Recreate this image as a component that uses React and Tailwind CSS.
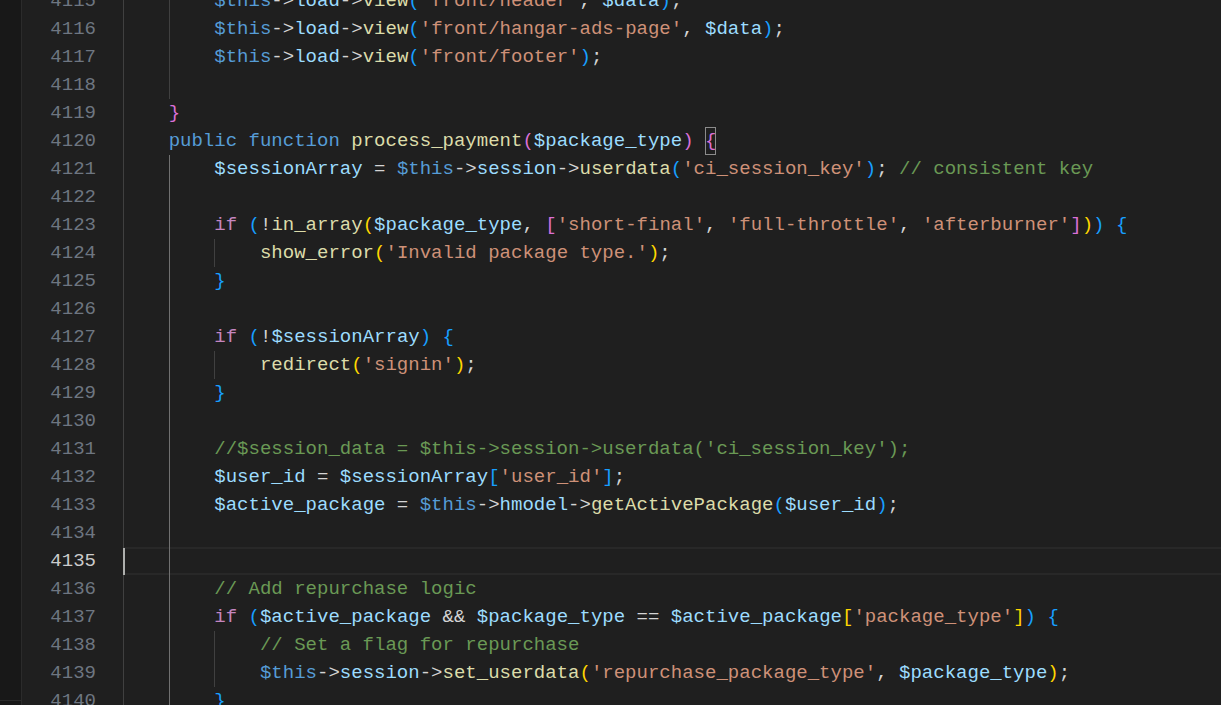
const C = {
  v: "text-[#9cdcfe]",
  t: "text-[#569cd6]",
  k: "text-[#c586c0]",
  f: "text-[#dcdcaa]",
  s: "text-[#ce9178]",
  c: "text-[#6a9955]",
  o: "text-[#d4d4d4]",
  y: "text-[#ffd700]",
  p: "text-[#da70d6]",
  b: "text-[#179fff]",
};

// guide kinds: d = dim, a = active scope
const OUTER = ["d", "d"];
const FN = ["d", "a"];
const IF = ["d", "a", "d"];

const lines = [
  { n: 4115, g: OUTER, code: [["$this", "t"], ["->", "o"], ["load", "v"], ["->", "o"], ["view", "f"], ["(", "b"], ["'front/header'", "s"], [", ", "o"], ["$data", "v"], [")", "b"], [";", "o"]] },
  { n: 4116, g: OUTER, code: [["$this", "t"], ["->", "o"], ["load", "v"], ["->", "o"], ["view", "f"], ["(", "b"], ["'front/hangar-ads-page'", "s"], [", ", "o"], ["$data", "v"], [")", "b"], [";", "o"]] },
  { n: 4117, g: OUTER, code: [["$this", "t"], ["->", "o"], ["load", "v"], ["->", "o"], ["view", "f"], ["(", "b"], ["'front/footer'", "s"], [")", "b"], [";", "o"]] },
  { n: 4118, g: OUTER, code: [] },
  { n: 4119, g: ["d"], code: [["}", "p"]] },
  { n: 4120, g: ["d"], code: [["public", "t"], [" ", "o"], ["function", "t"], [" ", "o"], ["process_payment", "f"], ["(", "p"], ["$package_type", "v"], [")", "p"], [" ", "o"], ["{", "p", true]] },
  { n: 4121, g: FN, code: [["$sessionArray", "v"], [" = ", "o"], ["$this", "t"], ["->", "o"], ["session", "v"], ["->", "o"], ["userdata", "f"], ["(", "b"], ["'ci_session_key'", "s"], [")", "b"], ["; ", "o"], ["// consistent key", "c"]] },
  { n: 4122, g: FN, code: [] },
  { n: 4123, g: FN, code: [["if", "k"], [" ", "o"], ["(", "b"], ["!", "o"], ["in_array", "f"], ["(", "y"], ["$package_type", "v"], [", ", "o"], ["[", "p"], ["'short-final'", "s"], [", ", "o"], ["'full-throttle'", "s"], [", ", "o"], ["'afterburner'", "s"], ["]", "p"], [")", "y"], [")", "b"], [" ", "o"], ["{", "b"]] },
  { n: 4124, g: IF, code: [["show_error", "f"], ["(", "y"], ["'Invalid package type.'", "s"], [")", "y"], [";", "o"]] },
  { n: 4125, g: FN, code: [["}", "b"]] },
  { n: 4126, g: FN, code: [] },
  { n: 4127, g: FN, code: [["if", "k"], [" ", "o"], ["(", "b"], ["!", "o"], ["$sessionArray", "v"], [")", "b"], [" ", "o"], ["{", "b"]] },
  { n: 4128, g: IF, code: [["redirect", "f"], ["(", "y"], ["'signin'", "s"], [")", "y"], [";", "o"]] },
  { n: 4129, g: FN, code: [["}", "b"]] },
  { n: 4130, g: FN, code: [] },
  { n: 4131, g: FN, code: [["//$session_data = $this->session->userdata('ci_session_key');", "c"]] },
  { n: 4132, g: FN, code: [["$user_id", "v"], [" = ", "o"], ["$sessionArray", "v"], ["[", "b"], ["'user_id'", "s"], ["]", "b"], [";", "o"]] },
  { n: 4133, g: FN, code: [["$active_package", "v"], [" = ", "o"], ["$this", "t"], ["->", "o"], ["hmodel", "v"], ["->", "o"], ["getActivePackage", "f"], ["(", "b"], ["$user_id", "v"], [")", "b"], [";", "o"]] },
  { n: 4134, g: FN, code: [] },
  { n: 4135, g: FN, code: [], current: true },
  { n: 4136, g: FN, code: [["// Add repurchase logic", "c"]] },
  { n: 4137, g: FN, code: [["if", "k"], [" ", "o"], ["(", "b"], ["$active_package", "v"], [" && ", "o"], ["$package_type", "v"], [" == ", "o"], ["$active_package", "v"], ["[", "y"], ["'package_type'", "s"], ["]", "y"], [")", "b"], [" ", "o"], ["{", "b"]] },
  { n: 4138, g: IF, code: [["// Set a flag for repurchase", "c"]] },
  { n: 4139, g: IF, code: [["$this", "t"], ["->", "o"], ["session", "v"], ["->", "o"], ["set_userdata", "f"], ["(", "y"], ["'repurchase_package_type'", "s"], [", ", "o"], ["$package_type", "v"], [")", "y"], [";", "o"]] },
  { n: 4140, g: FN, code: [["}", "b"]] },
];

function CodeLine({ line }) {
  return (
    <div
      className={
        "relative flex h-[28px] items-center whitespace-pre " +
        (line.current ? "border-y-2 border-[#282828]" : "")
      }
    >
      {line.g.map((kind, i) => (
        <span
          key={i}
          className={
            "h-[28px] w-[4ch] shrink-0 border-l " +
            (kind === "a" ? "border-[#707070]" : "border-[#404040]")
          }
        />
      ))}
      {line.code.map(([text, col, boxed], i) => (
        <span
          key={i}
          className={
            C[col] + (boxed ? " outline outline-1 outline-[#8b8b8b] -outline-offset-1" : "")
          }
        >
          {text}
        </span>
      ))}
      {line.current && (
        <span className="absolute left-0 top-[-1px] h-[27px] w-[2px] bg-[#aeafad]" />
      )}
    </div>
  );
}

export default function App() {
  return (
    <div
      className="flex h-[705px] w-[1221px] overflow-hidden bg-[#1f1f1f] text-[19.03px] leading-[28px]"
      style={{ fontFamily: '"Liberation Mono", "DejaVu Sans Mono", monospace' }}
    >
      {/* activity strip */}
      <div className="flex w-[22px] shrink-0 flex-col border-r border-[#2b2b2b] bg-[#181818]">
        <div className="flex-1" />
        <div className="h-[5px] border-t border-[#2b2b2b]" />
      </div>

      {/* line numbers */}
      <div className="w-[101px] shrink-0 overflow-hidden">
        <div className="-mt-[13px] flex flex-col">
          {lines.map((l) => (
            <div
              key={l.n}
              className={
                "h-[28px] pr-[27px] text-right " +
                (l.current ? "text-[#cccccc]" : "text-[#6e7681]")
              }
            >
              {l.n}
            </div>
          ))}
        </div>
      </div>

      {/* editor */}
      <div className="min-w-0 flex-1 overflow-hidden">
        <div className="-mt-[13px] flex flex-col">
          {lines.map((l) => (
            <CodeLine key={l.n} line={l} />
          ))}
        </div>
      </div>
    </div>
  );
}
